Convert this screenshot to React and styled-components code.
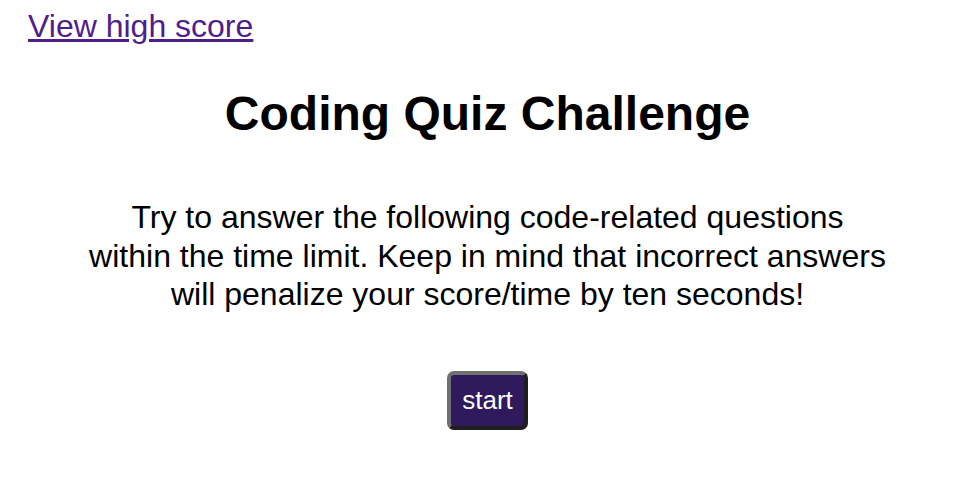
import React from "react";
import styled, { createGlobalStyle } from "styled-components";

const GlobalStyle = createGlobalStyle`
  body {
    margin: 8px;
    font-family: "Liberation Sans", Arial, sans-serif;
    background: #fff;
    color: #000;
  }
`;

const Header = styled.header`
  padding: 0 20px;
  line-height: 37px;
`;

const ScoreLink = styled.a`
  font-size: 32px;
  color: #4f1d8c;
  text-decoration: underline;
`;

const Main = styled.main`
  display: flex;
  flex-direction: column;
  align-items: center;
  text-align: center;
  padding-right: 5px;
`;

const Title = styled.h1`
  font-size: 48px;
  line-height: 55px;
  font-weight: bold;
  margin: 36px 0 0;
`;

const Intro = styled.p`
  font-size: 32px;
  line-height: 38.5px;
  max-width: 800px;
  margin: 57px 0 0;
`;

const StartButton = styled.button`
  font-family: "Liberation Sans", Arial, sans-serif;
  font-size: 26px;
  line-height: 30px;
  color: #fff;
  background: #2e1a5c;
  border: 4px solid;
  border-color: #707070 #1e1e1e #1e1e1e #707070;
  border-radius: 7px;
  padding: 10px 11px 11px;
  margin-top: 57px;
  cursor: pointer;
`;

export default function App() {
  return (
    <>
      <GlobalStyle />
      <Header>
        <ScoreLink href="#">View high score</ScoreLink>
      </Header>
      <Main>
        <Title>Coding Quiz Challenge</Title>
        <Intro>
          Try to answer the following code-related questions within the time
          limit. Keep in mind that incorrect answers will penalize your
          score/time by ten seconds!
        </Intro>
        <StartButton type="button">start</StartButton>
      </Main>
    </>
  );
}
